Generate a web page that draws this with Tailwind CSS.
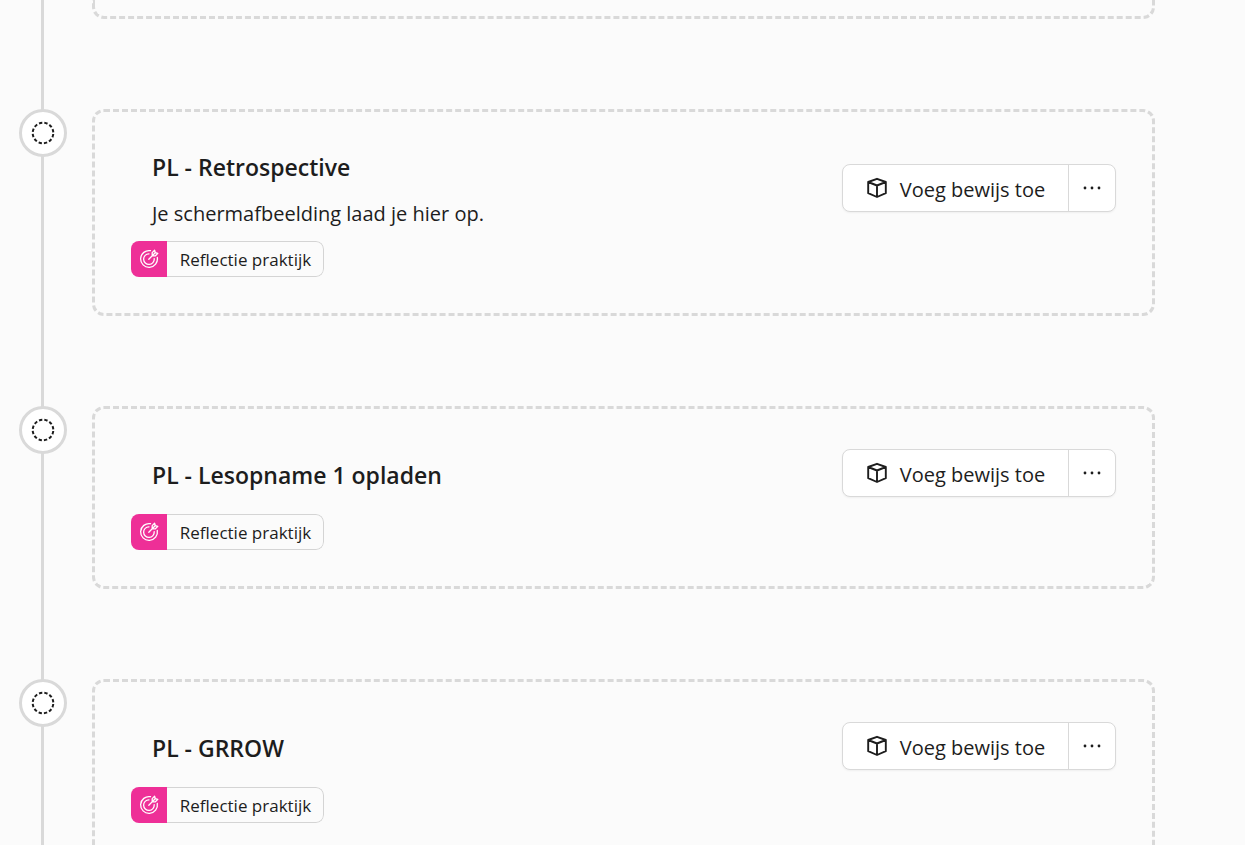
<!DOCTYPE html>
<html lang="nl">
<head>
<meta charset="utf-8">
<meta name="viewport" content="width=device-width, initial-scale=1">
<title>Portfolio</title>
<script src="https://cdn.jsdelivr.net/npm/@tailwindcss/browser@4"></script>
</head>
<body class="h-screen overflow-hidden bg-[#fbfbfb] font-['Segoe_UI','Open_Sans',sans-serif] text-[#1d1d1d]">
<svg class="hidden" aria-hidden="true">
  <symbol id="pending" viewBox="0 0 24 24"><circle cx="12" cy="12" r="10.3" fill="none" stroke="currentColor" stroke-width="2" stroke-dasharray="3.3 2.093" stroke-dashoffset="-1.05"/></symbol>
  <symbol id="box" viewBox="0 0 22 22"><path d="M11 1.8 19.8 5v11.2L11 20l-8.8-3.8V5ZM2.2 5 11 8.5 19.8 5M11 8.5V20" fill="none" stroke="currentColor" stroke-width="1.9" stroke-linejoin="round"/></symbol>
  <symbol id="dots" viewBox="0 0 18 4"><g fill="currentColor"><circle cx="2" cy="2" r="1.4"/><circle cx="9" cy="2" r="1.4"/><circle cx="16" cy="2" r="1.4"/></g></symbol>
  <symbol id="goal" viewBox="0 0 20 20"><g fill="none" stroke="currentColor" stroke-width="1.3" stroke-linecap="round" stroke-linejoin="round"><path d="M11.5 1.7A8.4 8.4 0 1 0 18.3 8.5M10 4.8A5.3 5.3 0 1 0 15.2 9.6M9.8 10.2 16.2 3.8M13.2 6.8V3.6L15.6 1.2 16.3 3.7 18.8 4.4 16.4 6.8Z"/></g></symbol>
</svg>
<main class="relative flex flex-col gap-[90px] pl-[19px] pr-[90px]">
  <div class="absolute inset-y-0 left-[41px] w-[3px] bg-[#d9d9d9]"></div>
  <div class="ml-[73px] h-[19px] shrink-0 rounded-b-xl border-[3px] border-t-0 border-dashed border-[#d9d9d9]"></div>

  <section class="relative flex items-start gap-[25px]">
    <div class="flex size-12 shrink-0 items-center justify-center rounded-full border-[3px] border-[#d9d9d9] bg-white"><svg class="size-6"><use href="#pending"/></svg></div>
    <article class="flex-1 rounded-xl border-[3px] border-dashed border-[#d9d9d9] p-9">
      <div class="flex min-h-14 items-center justify-between pl-[21px]">
        <div class="pt-[3px]">
          <h2 class="text-[23px] leading-8 font-semibold">PL - Retrospective</h2>
          <p class="mt-[17px] text-[20px] leading-7">Je schermafbeelding laad je hier op.</p>
        </div>
        <div class="flex h-12 w-[274px] shrink-0 rounded-lg border border-[#d9d9d9] bg-white shadow-xs">
          <button class="flex flex-1 items-center justify-center gap-3 text-[20px]"><svg class="size-[22px]"><use href="#box"/></svg><span class="pt-[3px]">Voeg bewijs toe</span></button>
          <button aria-label="Meer opties" class="flex w-[47px] items-center justify-center border-l border-[#d9d9d9]"><svg class="h-1 w-[18px]"><use href="#dots"/></svg></button>
        </div>
      </div>
      <div class="mt-[13px] flex h-9 w-[193px] items-center overflow-hidden rounded-lg">
        <span class="flex size-9 shrink-0 items-center justify-center bg-[#ee2f97] text-white"><svg class="size-5"><use href="#goal"/></svg></span>
        <span class="flex h-9 flex-1 items-center justify-center rounded-r-lg border border-l-0 border-[#d4d4d4] pt-px pl-px text-[17px]">Reflectie praktijk</span>
      </div>
    </article>
  </section>

  <section class="relative flex items-start gap-[25px]">
    <div class="flex size-12 shrink-0 items-center justify-center rounded-full border-[3px] border-[#d9d9d9] bg-white"><svg class="size-6"><use href="#pending"/></svg></div>
    <article class="flex-1 rounded-xl border-[3px] border-dashed border-[#d9d9d9] p-9">
      <div class="flex min-h-14 items-center justify-between pl-[21px]">
        <div class="pt-[3px]">
          <h2 class="text-[23px] leading-8 font-semibold">PL - Lesopname 1 opladen</h2>
        </div>
        <div class="flex h-12 w-[274px] shrink-0 rounded-lg border border-[#d9d9d9] bg-white shadow-xs">
          <button class="flex flex-1 items-center justify-center gap-3 text-[20px]"><svg class="size-[22px]"><use href="#box"/></svg><span class="pt-[3px]">Voeg bewijs toe</span></button>
          <button aria-label="Meer opties" class="flex w-[47px] items-center justify-center border-l border-[#d9d9d9]"><svg class="h-1 w-[18px]"><use href="#dots"/></svg></button>
        </div>
      </div>
      <div class="mt-[13px] flex h-9 w-[193px] items-center overflow-hidden rounded-lg">
        <span class="flex size-9 shrink-0 items-center justify-center bg-[#ee2f97] text-white"><svg class="size-5"><use href="#goal"/></svg></span>
        <span class="flex h-9 flex-1 items-center justify-center rounded-r-lg border border-l-0 border-[#d4d4d4] pt-px pl-px text-[17px]">Reflectie praktijk</span>
      </div>
    </article>
  </section>

  <section class="relative flex items-start gap-[25px]">
    <div class="flex size-12 shrink-0 items-center justify-center rounded-full border-[3px] border-[#d9d9d9] bg-white"><svg class="size-6"><use href="#pending"/></svg></div>
    <article class="flex-1 rounded-xl border-[3px] border-dashed border-[#d9d9d9] p-9">
      <div class="flex min-h-14 items-center justify-between pl-[21px]">
        <div class="pt-[3px]">
          <h2 class="text-[23px] leading-8 font-semibold">PL - GRROW</h2>
        </div>
        <div class="flex h-12 w-[274px] shrink-0 rounded-lg border border-[#d9d9d9] bg-white shadow-xs">
          <button class="flex flex-1 items-center justify-center gap-3 text-[20px]"><svg class="size-[22px]"><use href="#box"/></svg><span class="pt-[3px]">Voeg bewijs toe</span></button>
          <button aria-label="Meer opties" class="flex w-[47px] items-center justify-center border-l border-[#d9d9d9]"><svg class="h-1 w-[18px]"><use href="#dots"/></svg></button>
        </div>
      </div>
      <div class="mt-[13px] flex h-9 w-[193px] items-center overflow-hidden rounded-lg">
        <span class="flex size-9 shrink-0 items-center justify-center bg-[#ee2f97] text-white"><svg class="size-5"><use href="#goal"/></svg></span>
        <span class="flex h-9 flex-1 items-center justify-center rounded-r-lg border border-l-0 border-[#d4d4d4] pt-px pl-px text-[17px]">Reflectie praktijk</span>
      </div>
    </article>
  </section>
</main>
</body>
</html>
